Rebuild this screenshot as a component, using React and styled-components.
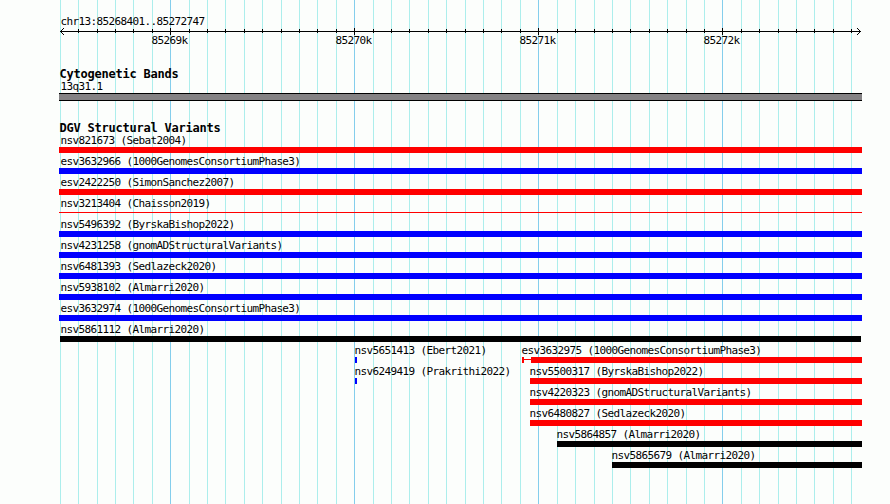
import React from 'react';
import styled, { createGlobalStyle } from 'styled-components';

const GlobalStyle = createGlobalStyle`
  body { margin: 0; background: #fcfefc; }
`;

const WIDTH = 890;
const HEIGHT = 504;
const RED = '#ff0000';
const BLUE = '#0000ff';
const BLACK = '#000000';

const TICKS = Array.from({ length: 44 }, (_, i) => ({
  x: Math.round(59.8 + i * 18.4035),
  major: i % 10 === 6,
}));

const Panel = styled.main`
  display: grid;
  width: ${WIDTH}px;
  height: ${HEIGHT}px;
  overflow: hidden;
  background: #fcfefc;
  color: #000;
  > * { grid-area: 1 / 1; }
`;

const Gridlines = styled.svg`
  display: block;
  shape-rendering: crispEdges;
`;

const Tracks = styled.div`
  z-index: 1;
  display: flex;
  flex-direction: column;
  padding-top: 15px;
`;

const Label = styled.div`
  height: 13px;
  margin-left: ${(p) => p.$x || 0}px;
  text-indent: 0.4px;
  font: 11px/13px "DejaVu Sans Mono", monospace;
  letter-spacing: -0.623px;
  white-space: pre;
`;

const Title = styled.h2`
  height: 12px;
  margin: 21px 0 0 59.5px;
  font: bold 12px/13px "DejaVu Sans Mono", monospace;
  letter-spacing: -0.225px;
  white-space: pre;
`;

const Axis = styled.svg`
  display: block;
  flex: none;
  shape-rendering: crispEdges;
`;

const Scale = styled.div`
  display: grid;
  grid-template-columns: repeat(4, 184px);
  height: 13px;
  margin: -1px 0 0 151px;
`;

const Band = styled.div`
  box-sizing: border-box;
  width: 803px;
  height: 8px;
  margin-left: 59px;
  border: solid #000;
  border-width: 1px 0;
  background: #848284;
`;

const Row = styled.div`
  display: grid;
  height: 21px;
  > * { grid-area: 1 / 1; }
`;

const Feature = styled.div`
  margin-left: ${(p) => p.$x}px;
`;

const Glyph = styled.div`
  display: flex;
  align-items: center;
  height: 6px;
`;

const Bar = styled.div`
  flex: none;
  width: ${(p) => p.$w}px;
  height: ${(p) => p.$h || 6}px;
  margin-left: ${(p) => p.$inset || 0}px;
  background: ${(p) => p.$color};
`;

const Connector = styled(Bar)`
  align-self: flex-start;
  margin-top: 2px;
`;

const bar = (start, end, color, h) => ({ start, end, color, h });
const item = (name, x, glyph, labelX = x) => ({ name, x, glyph, labelX });
const full = (name, color, h) => [item(name, 59, bar(59, 862, color, h), 60)];

const ROWS = [
  full('nsv821673 (Sebat2004)', RED),
  full('esv3632966 (1000GenomesConsortiumPhase3)', BLUE),
  full('esv2422250 (SimonSanchez2007)', RED),
  full('nsv3213404 (Chaisson2019)', RED, 1),
  full('nsv5496392 (ByrskaBishop2022)', BLUE),
  full('nsv4231258 (gnomADStructuralVariants)', BLUE),
  full('nsv6481393 (Sedlazeck2020)', BLUE),
  full('nsv5938102 (Almarri2020)', BLUE),
  full('esv3632974 (1000GenomesConsortiumPhase3)', BLUE),
  [item('nsv5861112 (Almarri2020)', 60, bar(60, 861, BLACK))],
  [
    item('nsv5651413 (Ebert2021)', 354, bar(355, 357, BLUE)),
    { ...item('esv3632975 (1000GenomesConsortiumPhase3)', 521, bar(531, 862, RED)), split: true },
  ],
  [
    item('nsv6249419 (Prakrithi2022)', 354, bar(355, 357, BLUE)),
    item('nsv5500317 (ByrskaBishop2022)', 529, bar(530, 862, RED)),
  ],
  [item('nsv4220323 (gnomADStructuralVariants)', 529, bar(530, 862, RED))],
  [item('nsv6480827 (Sedlazeck2020)', 529, bar(530, 862, RED))],
  [item('nsv5864857 (Almarri2020)', 556, bar(557, 862, BLACK))],
  [item('nsv5865679 (Almarri2020)', 611, bar(612, 862, BLACK))],
];

function Variant({ name, x, labelX, glyph, split }) {
  const width = glyph.end - glyph.start;
  return (
    <Feature $x={x}>
      <Label $x={labelX - x}>{name}</Label>
      <Glyph>
        {split ? (
          <>
            <Bar $inset={1} $w={2} $color={glyph.color} />
            <Connector $w={7} $h={1} $color={glyph.color} />
            <Bar $w={width} $color={glyph.color} />
          </>
        ) : glyph.h ? (
          <Connector $w={width} $h={glyph.h} $color={glyph.color} />
        ) : (
          <Bar $inset={glyph.start - x} $w={width} $color={glyph.color} />
        )}
      </Glyph>
    </Feature>
  );
}

export default function App() {
  return (
    <>
      <GlobalStyle />
      <Panel>
        <Gridlines width={WIDTH} height={HEIGHT}>
          {TICKS.map(({ x, major }) => (
            <rect key={x} x={x} y="0" width="1" height={HEIGHT} fill={major ? '#84ceec' : '#aceeec'} />
          ))}
        </Gridlines>
        <Tracks>
          <Label $x={60}>chr13:85268401..85272747</Label>
          <Axis width={WIDTH} height="7">
            <rect x="60" y="3" width="801" height="1" />
            {TICKS.slice(1).map(({ x, major }) => (
              <rect key={x} x={x} y={major ? 0 : 1} width="1" height={major ? 7 : 4} />
            ))}
            {[1, 2, 3].map((d) => (
              <React.Fragment key={d}>
                <rect x={60 + d} y={3 - d} width="1" height="1" />
                <rect x={60 + d} y={3 + d} width="1" height="1" />
                <rect x={860 - d} y={3 - d} width="1" height="1" />
                <rect x={860 - d} y={3 + d} width="1" height="1" />
              </React.Fragment>
            ))}
          </Axis>
          <Scale>
            {['85269k', '85270k', '85271k', '85272k'].map((t) => <Label key={t}>{t}</Label>)}
          </Scale>
          <Title>Cytogenetic Bands</Title>
          <Label $x={60}>13q31.1</Label>
          <Band />
          <Title>DGV Structural Variants</Title>
          {ROWS.map((items) => (
            <Row key={items[0].name}>
              {items.map((v) => <Variant key={v.name} {...v} />)}
            </Row>
          ))}
        </Tracks>
      </Panel>
    </>
  );
}
